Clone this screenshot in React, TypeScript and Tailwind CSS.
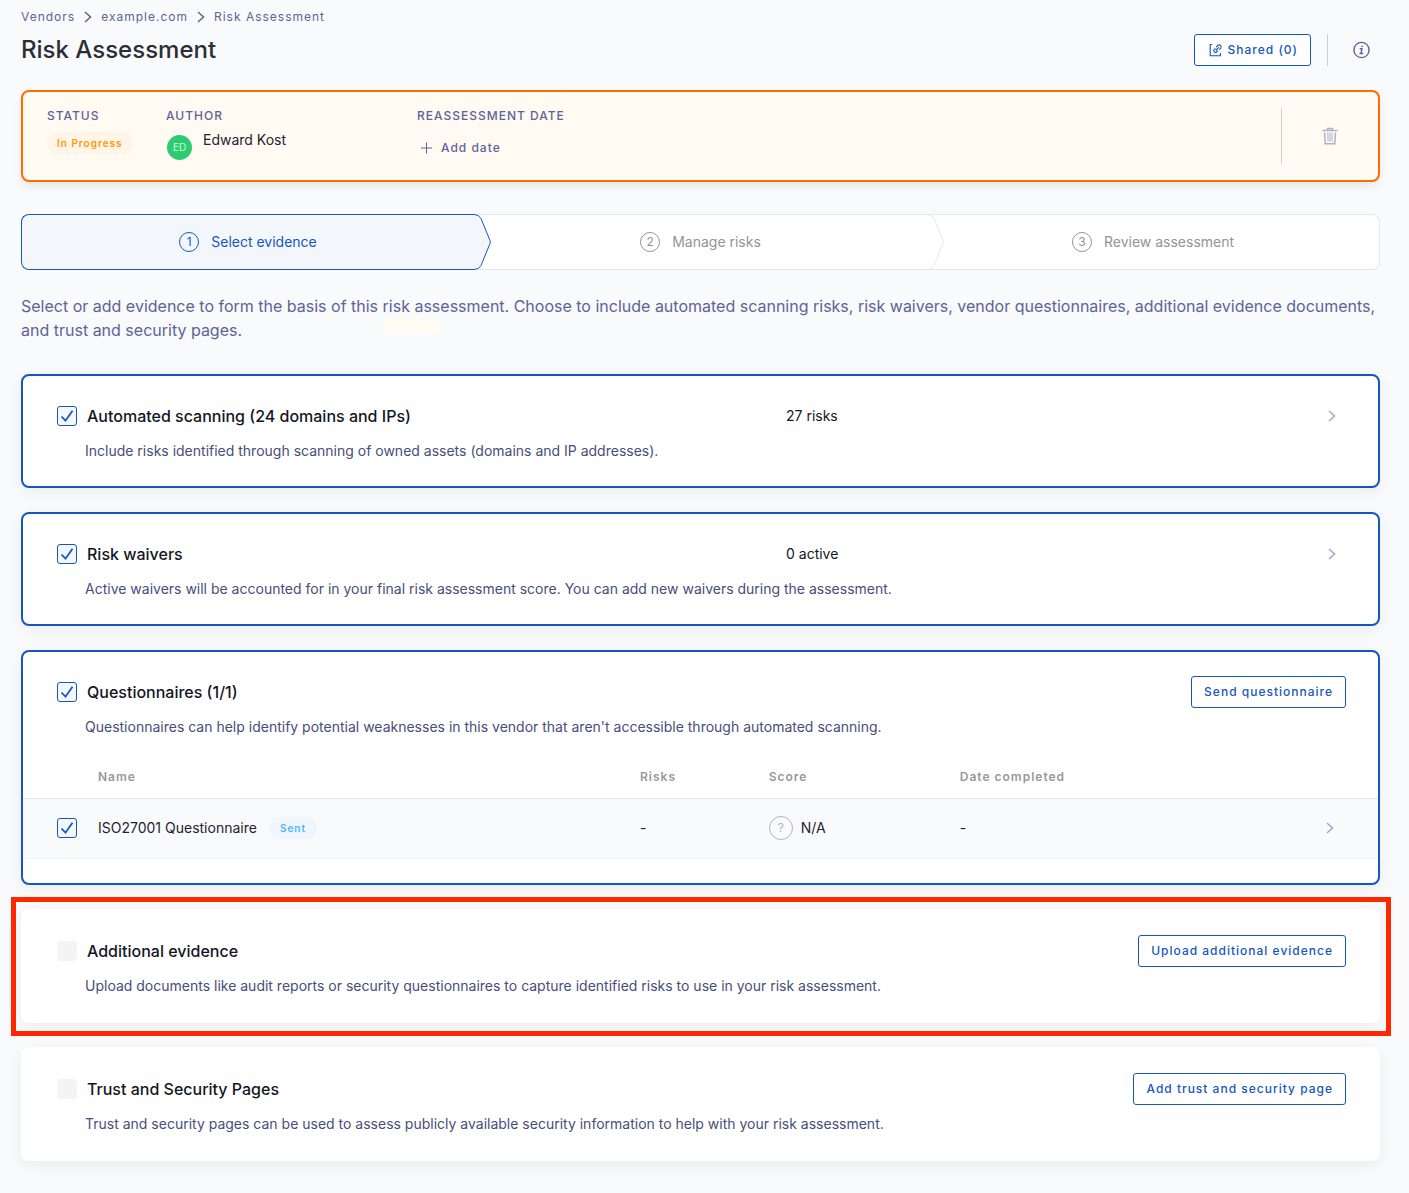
import { useId, useState } from "react";
import type { ReactNode } from "react";
import clsx from "clsx";

const steps = ["Select evidence", "Manage risks", "Review assessment"] as const;

const questionnaires = [
  { name: "ISO27001 Questionnaire", status: "Sent", risks: "-", score: "N/A", completed: "-" },
] as const;

function Chevron({ className }: { className?: string }) {
  return (
    <svg viewBox="0 0 8 12" fill="none" stroke="currentColor" strokeWidth="1.5" className={className} aria-hidden="true">
      <path d="M1 1l5.5 5L1 11" />
    </svg>
  );
}

function Breadcrumbs() {
  return (
    <nav aria-label="Breadcrumb" className="flex items-center gap-[9px] text-xs leading-4 tracking-[1px] text-[#5d6399]">
      <a href="#vendors">Vendors</a>
      <Chevron className="h-3 w-2" />
      <a href="#vendor">example.com</a>
      <Chevron className="h-3 w-2" />
      <a href="#assessment" aria-current="page">
        Risk Assessment
      </a>
    </nav>
  );
}

function OutlineButton({ children }: { children: ReactNode }) {
  return (
    <button
      type="button"
      className="flex h-8 shrink-0 items-center rounded-[3px] border border-[#1556bf] bg-white px-3 text-xs font-medium tracking-[1px] text-[#1556bf]"
    >
      {children}
    </button>
  );
}

function Header() {
  return (
    <div className="mt-[9px] flex h-8 items-center justify-between">
      <h1 className="text-2xl font-medium text-[#2a2e36]">Risk Assessment</h1>
      <div className="flex items-center gap-4">
        <OutlineButton>
          <svg viewBox="0 0 14 14" fill="none" stroke="currentColor" className="mr-[5px] ml-[2px] h-[14px] w-[14px]" aria-hidden="true">
            <path d="M3.200 1.500H1.200v11.200h10.200V10" strokeWidth="1.100" />
            <path d="M6.400 5.400L5.200 6.600a1.700 1.700 0 0 0 2.400 2.400l1.300-1.300M7.200 4.200l1.700-1.900a2 2 0 0 1 2.800 2.800L10.200 6.700M6.700 7.500l3-3.200" strokeWidth="1.100" />
          </svg>
          Shared (0)
        </OutlineButton>
        <div className="h-8 w-px bg-[#cdcfdd]" />
        <button type="button" aria-label="Information" className="flex h-8 w-9 items-center justify-center text-[#5d6399]">
          <svg viewBox="0 0 18 18" fill="none" stroke="currentColor" strokeWidth="1.4" className="h-[18px] w-[18px]" aria-hidden="true">
            <circle cx="8.500" cy="9" r="7.600" />
            <path d="M6.700 7.700H8.900L8.100 12.300M6.500 12.500h3.700" />
            <circle cx="9.100" cy="5.200" r="0.500" fill="currentColor" strokeWidth="0.800" />
          </svg>
        </button>
      </div>
    </div>
  );
}

function FieldLabel({ children }: { children: ReactNode }) {
  return <div className="text-xs leading-4 font-medium tracking-[1px] text-[#5d6399] uppercase">{children}</div>;
}

function StatusPanel() {
  return (
    <section className="mt-6 flex rounded-lg border-2 border-[#ff6c00] bg-[#fffaf2] py-4 pl-6 shadow-[0_4px_8px_rgba(0,0,0,0.08)]">
      <div className="w-[119px]">
        <FieldLabel>Status</FieldLabel>
        <span className="mt-2 inline-flex h-[22px] items-center rounded-full bg-[#fff4e8] px-[10px] text-[10px] font-semibold tracking-[1px] text-[#ff9900]">
          In Progress
        </span>
      </div>
      <div className="w-[251px]">
        <FieldLabel>Author</FieldLabel>
        <div className="mt-[6px] flex items-start gap-[11px]">
          <span className="mt-[5px] ml-px flex h-[25px] w-[25px] items-center justify-center rounded-full bg-[#2ecc71] text-[10px] text-[#d5f5e3]">
            ED
          </span>
          <span className="text-sm leading-5 text-[#1e2330]">Edward Kost</span>
        </div>
      </div>
      <div className="flex-1">
        <FieldLabel>Reassessment date</FieldLabel>
        <button
          type="button"
          className="mt-[14px] ml-1 flex h-5 items-center gap-2 text-xs font-medium tracking-[1px] text-[#5d6399]"
        >
          <svg viewBox="0 0 12 12" fill="none" stroke="currentColor" className="h-3 w-3" aria-hidden="true">
            <path d="M5.500 .5v11M0 6h11" />
          </svg>
          Add date
        </button>
      </div>
      <div className="flex h-14 w-[97px] items-center justify-center border-l border-[#cdcfdd]">
        <button type="button" aria-label="Delete assessment" className="text-[#aeb1cc]">
          <svg viewBox="0 0 16 18" fill="none" stroke="currentColor" className="h-[18px] w-4" aria-hidden="true">
            <path d="M.5 3.500h15M5.500 3.200V1.500h5v1.700" strokeWidth="1.300" />
            <path d="M2.500 5.500l.7 11.200h9.600l.7-11.200" strokeWidth="1.500" />
            <path d="M5.800 5.500l.3 9M8 5.500v9M10.200 5.500l-.3 9" />
          </svg>
        </button>
      </div>
    </section>
  );
}

function Steps() {
  const [current, setCurrent] = useState(0);

  return (
    <div className="mt-8 grid grid-cols-3">
      {steps.map((label, i) => {
        const active = i === current;
        const last = i === steps.length - 1;
        return (
          <button
            key={label}
            type="button"
            onClick={() => setCurrent(i)}
            aria-current={active ? "step" : undefined}
            className={clsx(
              "relative flex h-14 items-center justify-center gap-3 border-y text-sm",
              i === 0 && "z-20 rounded-l-lg border-l",
              i === 1 && "z-10",
              last && "rounded-r-lg border-r",
              active ? "border-[#1556bf] bg-[#f3f7fc] text-[#1556bf]" : "border-[#e6e7ea] bg-white text-[#929498]"
            )}
          >
            <span className="flex h-5 w-5 items-center justify-center rounded-full border border-current text-xs">
              {i + 1}
            </span>
            {label}
            {/* Arrow head that overlaps the next step */}
            {!last && (
              <svg
                viewBox="0 0 18 56"
                className={clsx(
                  "absolute -top-px left-full h-14 w-[18px]",
                  active ? "fill-[#f3f7fc] stroke-[#1556bf]" : "fill-white stroke-[#e6e7ea]"
                )}
                aria-hidden="true"
              >
                <path d="M0 .5Q5 .5 7 4.500L16 26.500Q16.600 28 16 29.500L7 51.500Q5 55.500 0 55.500" />
              </svg>
            )}
          </button>
        );
      })}
    </div>
  );
}

type CheckboxProps = {
  id?: string;
  label?: string;
  defaultChecked?: boolean;
  disabled?: boolean;
};

function Checkbox({ id, label, defaultChecked, disabled }: CheckboxProps) {
  return (
    <span className="relative block h-5 w-5 shrink-0">
      <input
        id={id}
        type="checkbox"
        aria-label={label}
        defaultChecked={defaultChecked}
        disabled={disabled}
        className="peer block h-5 w-5 appearance-none rounded-[3px] border border-[#1556bf] bg-[#f3f7fc] disabled:border-[#f4f4f5] disabled:bg-[#f4f4f5]"
      />
      <svg
        viewBox="0 0 20 20"
        fill="none"
        stroke="#1556bf"
        strokeWidth="1.800"
        className="pointer-events-none absolute inset-0 hidden h-5 w-5 peer-checked:block"
        aria-hidden="true"
      >
        <path d="M4.500 10.500l4 4.200L15.500 4.800" />
      </svg>
    </span>
  );
}

type EvidenceCardProps = {
  title: string;
  description: string;
  summary?: string;
  action?: string;
  selected?: boolean;
  highlighted?: boolean;
  children?: ReactNode;
};

function EvidenceCard({ title, description, summary, action, selected, highlighted, children }: EvidenceCardProps) {
  const id = useId();

  return (
    <section
      className={clsx(
        "relative rounded-lg border-2 bg-white shadow-[0_4px_16px_rgba(0,0,0,0.06)]",
        selected ? "border-[#1556bf]" : "border-white"
      )}
    >
      <div className="pt-6 pr-8 pl-[34px]">
        <div className="flex h-8 items-center">
          <div className="flex flex-[729] items-center gap-[10px]">
            <Checkbox id={id} defaultChecked={selected} disabled={!selected} />
            <label htmlFor={id} className="text-base font-medium text-[#14161f]">
              {title}
            </label>
          </div>
          <div className="flex flex-[560] items-center justify-between">
            <span className="text-sm text-[#14161f]">{summary}</span>
            {action ? (
              <OutlineButton>{action}</OutlineButton>
            ) : (
              <button type="button" aria-label={`Open ${title}`} className="flex h-8 w-7 items-center justify-center text-[#a3a6c6]">
                <Chevron className="h-3 w-2" />
              </button>
            )}
          </div>
        </div>
        <p className="mt-[9px] ml-7 text-sm leading-5 text-[#484d7c]">{description}</p>
      </div>
      {children ?? <div className="h-[25px]" />}
      {highlighted && (
        <div className="pointer-events-none absolute -top-[14px] -right-[13px] -bottom-[15px] -left-3 border-5 border-[#ff2600]" />
      )}
    </section>
  );
}

function QuestionnaireTable() {
  return (
    <table className="mt-5 mb-6 w-full table-fixed text-left text-sm">
      <colgroup>
        <col className="w-[75px]" />
        <col className="w-[40%]" />
        <col className="w-[9.5%]" />
        <col className="w-[14.1%]" />
        <col />
        <col className="w-[62px]" />
      </colgroup>
      <thead>
        <tr className="h-[41px] border-b border-[#e6e7ea] text-xs tracking-[1px] text-[#96989c]">
          <td />
          <th className="font-semibold">Name</th>
          <th className="font-semibold">Risks</th>
          <th className="font-semibold">Score</th>
          <th className="font-semibold">Date completed</th>
          <td />
        </tr>
      </thead>
      <tbody>
        {questionnaires.map((q) => (
          <tr key={q.name} className="h-[60px] border-b border-[#eff5fd] bg-[#f9fafc] text-[#1e2330]">
            <td className="pl-[34px]">
              <Checkbox label={q.name} defaultChecked />
            </td>
            <td>
              <div className="flex items-center gap-3">
                {q.name}
                <span className="flex h-[22px] items-center rounded-full bg-[#eff6fe] px-[11px] text-[10px] font-semibold tracking-[1px] text-[#4db5ff]">
                  {q.status}
                </span>
              </div>
            </td>
            <td>{q.risks}</td>
            <td>
              <div className="flex items-center gap-2">
                <span className="flex h-6 w-6 items-center justify-center rounded-full border border-[#aeb1cc] text-xs text-[#aeb1cc]">
                  ?
                </span>
                {q.score}
              </div>
            </td>
            <td>{q.completed}</td>
            <td>
              <button type="button" aria-label={`Open ${q.name}`} className="flex h-8 w-7 items-center justify-center text-[#a3a6c6]">
                <Chevron className="h-3 w-2" />
              </button>
            </td>
          </tr>
        ))}
      </tbody>
    </table>
  );
}

export default function App() {
  return (
    <main className="min-h-screen bg-[#f9fafc] pt-[9px] pr-[29px] pb-8 pl-[21px] font-['Inter',sans-serif]">
      <Breadcrumbs />
      <Header />
      <StatusPanel />
      <Steps />
      <div className="relative mt-6">
        <span className="absolute top-6 left-[362px] h-[15px] w-[58px] bg-[#fffaf2]" />
        <p className="relative text-base leading-6 text-[#5d6399]">
          Select or add evidence to form the basis of this risk assessment. Choose to include automated scanning risks,
          risk waivers, vendor questionnaires, additional evidence documents, and trust and security pages.
        </p>
      </div>
      <div className="mt-8 flex flex-col gap-6">
        <EvidenceCard
          title="Automated scanning (24 domains and IPs)"
          description="Include risks identified through scanning of owned assets (domains and IP addresses)."
          summary="27 risks"
          selected
        />
        <EvidenceCard
          title="Risk waivers"
          description="Active waivers will be accounted for in your final risk assessment score. You can add new waivers during the assessment."
          summary="0 active"
          selected
        />
        <EvidenceCard
          title="Questionnaires (1/1)"
          description="Questionnaires can help identify potential weaknesses in this vendor that aren't accessible through automated scanning."
          action="Send questionnaire"
          selected
        >
          <QuestionnaireTable />
        </EvidenceCard>
        <EvidenceCard
          title="Additional evidence"
          description="Upload documents like audit reports or security questionnaires to capture identified risks to use in your risk assessment."
          action="Upload additional evidence"
          highlighted
        />
        <EvidenceCard
          title="Trust and Security Pages"
          description="Trust and security pages can be used to assess publicly available security information to help with your risk assessment."
          action="Add trust and security page"
        />
      </div>
    </main>
  );
}
